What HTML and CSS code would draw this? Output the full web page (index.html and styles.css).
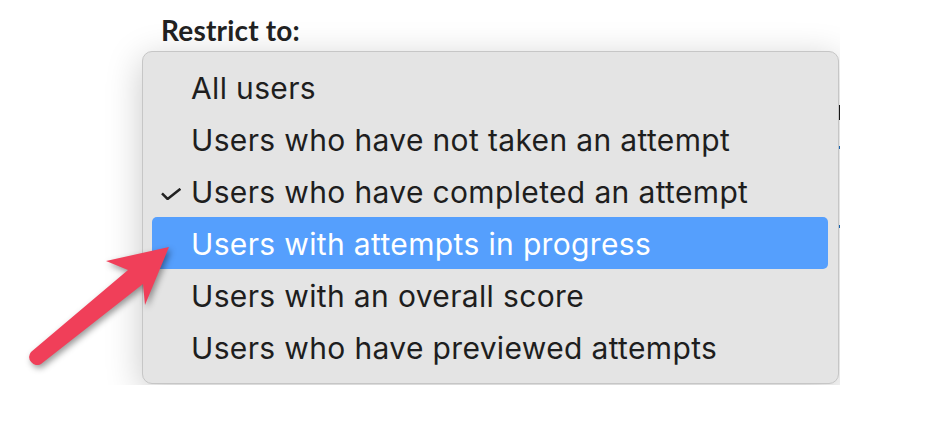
FILE: index.html
```html
<!DOCTYPE html>
<html lang="en">
<head>
<meta charset="utf-8">
<title>Restrict to</title>
<link rel="stylesheet" href="styles.css">
</head>
<body>
<div class="stage">
  <div class="page">
    <div class="label">Restrict to:</div>
    <div class="peek">
      <span class="peek-dark"></span>
      <span class="peek-blue first"></span>
      <span class="peek-blue second"></span>
    </div>
  </div>
  <ul class="menu">
    <li class="item"><span class="gutter"></span><span class="text">All users</span></li>
    <li class="item"><span class="gutter"></span><span class="text">Users who have not taken an attempt</span></li>
    <li class="item"><span class="gutter"><svg class="check" viewBox="0 0 20 12" width="20" height="12"><path d="M1 5.4 L6.6 11 L19.4 0.8" fill="none" stroke="#222" stroke-width="2.5" stroke-linejoin="miter"/></svg></span><span class="text">Users who have completed an attempt</span></li>
    <li class="item active"><span class="gutter"></span><span class="text">Users with attempts in progress</span></li>
    <li class="item"><span class="gutter"></span><span class="text">Users with an overall score</span></li>
    <li class="item"><span class="gutter"></span><span class="text">Users who have previewed attempts</span></li>
  </ul>
</div>
<svg class="arrow" viewBox="0 0 926 432" width="926" height="432">
  <path d="M169 247 L106 261 L128 270 L31 352 A8 8 0 0 0 41 364 L143 284 L145 305 Z" fill="#f03f59"/>
</svg>
</body>
</html>
```
FILE: styles.css
```css
html, body {
  margin: 0;
  padding: 0;
  background: #ffffff;
}

body {
  width: 926px;
  height: 432px;
  position: relative;
  overflow: hidden;
}

.stage {
  position: relative;
  width: 840px;
  height: 385px;
  overflow: hidden;
}

.page {
  display: flex;
  flex-direction: column;
}

.label {
  padding: 14px 0 0 161px;
  font-family: Lato, "Open Sans", sans-serif;
  font-weight: 700;
  font-size: 28px;
  letter-spacing: 0.2px;
  line-height: 32px;
  color: #222222;
}

.peek {
  display: flex;
  flex-direction: column;
  margin-left: 838px;
  width: 2px;
}

.peek-dark {
  display: block;
  height: 15px;
  margin-top: 59px;
  background: #1a1a1a;
}

.peek-blue {
  display: block;
  height: 3px;
  background: #1d6fc0;
}

.peek-blue.first {
  margin-top: 26px;
}

.peek-blue.second {
  margin-top: 76px;
}

.menu {
  position: absolute;
  left: 142px;
  top: 51px;
  width: 697px;
  box-sizing: border-box;
  margin: 0;
  padding: 9px 10px 10px 9px;
  list-style: none;
  background: #e4e4e4;
  border: 1px solid #c6c6c6;
  border-radius: 10px;
  box-shadow: 0 8px 36px rgba(0, 0, 0, 0.22);
}

.item {
  display: flex;
  align-items: center;
  height: 52px;
  border-radius: 5px;
  font-family: Inter, "Noto Sans", sans-serif;
  font-size: 30px;
  letter-spacing: 0.35px;
  color: #1e1e1e;
}

.item.active {
  background: #559ffd;
  color: #ffffff;
}

.gutter {
  display: flex;
  align-items: center;
  width: 39px;
  height: 100%;
  flex: none;
}

.check {
  display: block;
  margin: 6px 0 0 9px;
}

.text {
  line-height: 52px;
  padding-top: 1px;
}

.arrow {
  position: absolute;
  left: 0;
  top: 0;
  pointer-events: none;
  filter: drop-shadow(2px 3px 3px rgba(0, 0, 0, 0.4));
}
```
